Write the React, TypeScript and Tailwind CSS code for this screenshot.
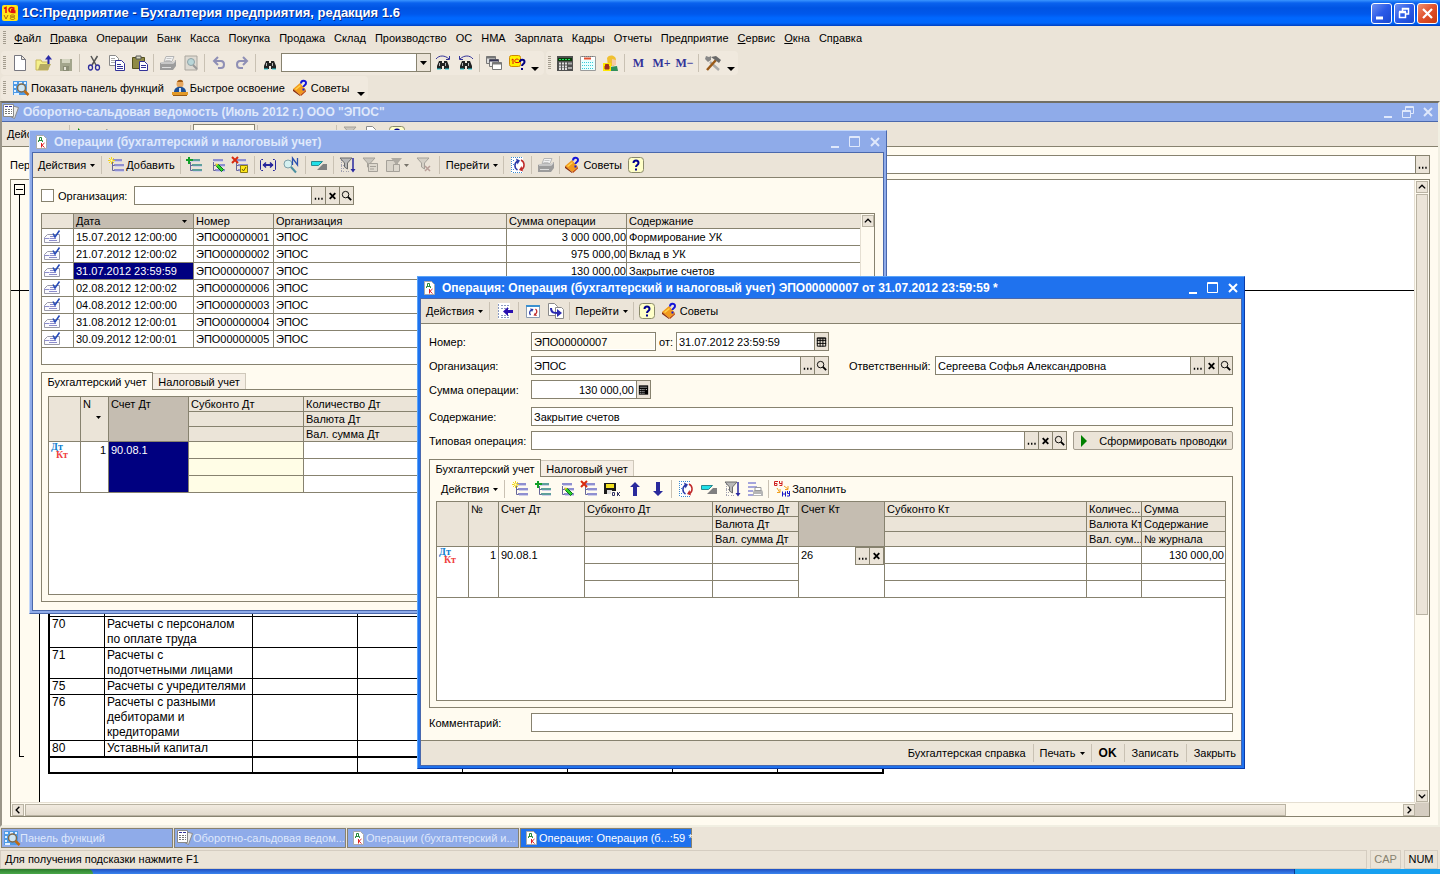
import type { InputHTMLAttributes, ReactNode } from "react"

type IconName = keyof typeof icons

const lines = (color = "#8f8fd0") => (
  <g>
    <path d="M4 2h10v2H4zM6 7h10v2H6zM6 12h10v2H6z" fill={color} />
    <path d="M5 4.500h9M7 9.500h9M7 14.500h9" stroke="#cfcfe8" />
    <path d="M4.500 5v8.500h2M4.500 8.500h2" stroke="#666699" fill="none" />
  </g>
)

const funnel = (fill: string, stroke: string) => (
  <path d="M1 1h12L8.500 6v6l-3-2V6z" fill={fill} stroke={stroke} />
)

const binoculars = (
  <g>
    <path d="M4 6h3v2h2V6h3l2 5v3h-5v-3H7v3H2v-3z" fill="#222" />
    <path d="M4.500 8v3M10.500 8v3" stroke="#b9b9b9" />
    <path d="M2 14h4M10 14h4" stroke="#20c8d8" />
  </g>
)

const icons = {
  logo: (
    <g>
      <rect width="16" height="16" rx="2" fill="#ffe61a" />
      <path d="M2 3.500l2-1V8M12.500 3.500C8 1 6 4 7.500 6.500c1 1 3 1 6 1M12.500 5c-2-1-3-.5-3 .5s2 .5 4 .5" stroke="#e01010" strokeWidth="1.500" fill="none" />
      <path d="M2 10l2 4 2-4M10.500 10c-3 0-3 2 0 2s3 2.500 0 2.500-3-2.500 0-2.500 3-2 0-2" stroke="#a86a10" fill="none" />
    </g>
  ),
  page: <path d="M2.500.5h7l4 4v11h-11zM9.500.5v4h4" fill="#fff" stroke="#77777f" />,
  open: (
    <g>
      <path d="M1 5h5l1 2h6v8H1z" fill="#f5f08a" stroke="#c9b85a" />
      <path d="M3 15l2-6h11l-3 6z" fill="#b5ab62" />
      <path d="M13.500 9V2" stroke="#2a2aa8" strokeWidth="2" />
      <path d="M10 4.500L13.500 0 17 4.500z" fill="#2a2aa8" />
    </g>
  ),
  save: (
    <g>
      <path d="M2 4h12v12H2z" fill="#a3a58c" />
      <path d="M4 4h8v4H4z" fill="#d3d3bf" />
      <path d="M5 11h6v5H5z" fill="#8b8d76" />
      <path d="M6 12h2v3H6z" fill="#e5e3d5" />
    </g>
  ),
  cut: (
    <g fill="none">
      <path d="M5 1l5 9M11.500 1L6 10" stroke="#555" strokeWidth="1.500" />
      <ellipse cx="4.500" cy="12.500" rx="2" ry="2.500" stroke="#2d2d9c" strokeWidth="1.300" />
      <ellipse cx="11.500" cy="12.500" rx="2" ry="2.500" stroke="#2d2d9c" strokeWidth="1.300" />
    </g>
  ),
  copy: (
    <g>
      <path d="M.5.5h6l3 3v7h-9z" fill="#fff" stroke="#8a8a8a" />
      <path d="M2 3.500h4M2 5.500h6M2 7.500h6" stroke="#aaa" />
      <path d="M6.500 5.500h6l3 3v7h-9z" fill="#fff" stroke="#333399" />
      <path d="M8 9.500h4M8 11.500h6M8 13.500h6" stroke="#333399" />
    </g>
  ),
  paste: (
    <g>
      <path d="M.5 2.500h12v11H.5z" fill="#8f8a45" stroke="#55511f" />
      <path d="M4 1h5v3H4z" fill="#d9d9c2" stroke="#555" />
      <path d="M7.500 6.500h5l3 3v6h-8z" fill="#fff" stroke="#333399" />
      <path d="M9 10.500h5M9 12.500h5" stroke="#333399" />
    </g>
  ),
  print: (
    <g>
      <path d="M6 1.500h8l-2 5H4z" fill="#f2f2f2" stroke="#b5b5b5" />
      <path d="M6.500 3.500h5M5.500 5.500h5" stroke="#c5c5c5" />
      <path d="M0 8l2-1h11l3-2v6l-3 4H0z" fill="#9c9c9c" />
      <path d="M1 8h12l2-2" stroke="#d5d5d5" strokeWidth="1.500" fill="none" />
      <path d="M2 12.500h9" stroke="#ddd" />
    </g>
  ),
  preview: (
    <g>
      <path d="M2 1h12v14H2z" fill="#dedad2" stroke="#aaa69e" />
      <circle cx="8" cy="7" r="3.500" fill="#b9d6d8" stroke="#8fa3a6" />
      <path d="M10 10l4 4" stroke="#999" strokeWidth="2" />
    </g>
  ),
  undo: (
    <g fill="none" stroke="#8f8fb5" strokeWidth="2">
      <path d="M4 6h6c4 0 4 7 0 7H7" />
      <path d="M7 2L3 6l4 4" />
    </g>
  ),
  redo: (
    <g fill="none" stroke="#8f8fb5" strokeWidth="2">
      <path d="M12 6H6c-4 0-4 7 0 7h3" />
      <path d="M9 2l4 4-4 4" />
    </g>
  ),
  find: binoculars,
  findNext: (
    <g>
      {binoculars}
      <path d="M1 4c3-4 9-4 13 0M14.500 1v3.500H11" stroke="#333399" fill="none" />
    </g>
  ),
  findPrev: (
    <g>
      {binoculars}
      <path d="M15 4c-3-4-9-4-13 0M1.500 1v3.500H5" stroke="#333399" fill="none" />
    </g>
  ),
  windows: (
    <g stroke="#777">
      <path d="M.5 1.500h9v7h-9z" fill="#ddd" />
      <path d="M.5 2.500h9" strokeWidth="2" />
      <path d="M3.500 4.500h9v7h-9z" fill="#eee" />
      <path d="M3.500 5.500h9" stroke="#335" strokeWidth="2" />
      <path d="M6.500 7.500h9v7h-9z" fill="#fff" />
      <path d="M6.500 8.500h9" strokeWidth="2" />
    </g>
  ),
  help1c: (
    <g>
      <rect x=".5" y=".5" width="11" height="11" rx="2" fill="#fff200" stroke="#d08a00" />
      <path d="M2.500 5l1.500-1v5M9.500 4.500C6 3 5 6 6.500 7.500h4" stroke="#e01010" fill="none" />
      <path d="M11 7c0-3 4.500-3 4.500 0 0 2-2.500 2-2.500 4M13 13v2" stroke="#000080" strokeWidth="2" fill="none" />
    </g>
  ),
  calc: (
    <g>
      <path d="M0 1h16v15H0z" fill="#505050" />
      <path d="M1 3h14v3H1z" fill="#0a3a0a" />
      <path d="M2 4.500h12" stroke="#20e060" strokeDasharray="2 1" />
      <path d="M2 8.500h8M2 11.500h8M2 14h8" stroke="#ddd" strokeWidth="2" strokeDasharray="2 1" />
      <path d="M11 8.500h4M11 13h4" stroke="#aaa" strokeWidth="2" />
    </g>
  ),
  calendar: (
    <g>
      <path d="M.5 1.500h15v14H.5z" fill="#e8ffff" stroke="#9a9a9a" />
      <path d="M1 2h14v3H1z" fill="#fff" />
      <path d="M4 3.500h7" stroke="#e05030" strokeWidth="2" />
      <path d="M2 1.500h12" stroke="#777" strokeDasharray="1 1" />
      <path d="M2 7.500h12M2 10.500h12M2 13.500h12" stroke="#38c8d8" strokeDasharray="1 1" />
    </g>
  ),
  user: (
    <g>
      <path d="M4 3c2-4 9-3 9 2l-2 6H5z" fill="#f0c030" />
      <path d="M9 4l4 1v5l-4 1z" fill="#f5c9a5" />
      <path d="M7 12l7-1 1 5H7z" fill="#2f8f5a" />
      <path d="M0 8h8v8H0z" fill="#ffe800" />
      <path d="M2 11h4v3H2zM2.500 11V9.500h3V11" fill="#a03020" stroke="#a03020" />
    </g>
  ),
  tools: (
    <g>
      <path d="M5 7l9 8" stroke="#aaa" strokeWidth="2.500" />
      <path d="M1 1l3 1 2-1v4L3 7 0 4z" fill="#888" />
      <path d="M11 5L2 15" stroke="#9a5a18" strokeWidth="2.500" />
      <path d="M6 2l5-1 5 4-2 3-4-3z" fill="#6a6a6a" />
    </g>
  ),
  panel: (
    <g>
      <path d="M0 1h14v14H0z" fill="#4f9be6" />
      <path d="M1 3h3M6 3h3M11 3h2M1 7h2M1 11h2M1 14h5" stroke="#e3f1ff" strokeWidth="2" />
      <circle cx="8.500" cy="8" r="4" fill="#cfe6f2" stroke="#806a4a" strokeWidth="1.500" />
      <path d="M11.500 11l4 4" stroke="#c06a10" strokeWidth="2.500" />
    </g>
  ),
  learn: (
    <g>
      <circle cx="8" cy="4" r="3.500" fill="#e8a860" />
      <path d="M5 2c1-3 6-3 6 0z" fill="#a05a10" />
      <path d="M2 12c0-7 12-7 12 0z" fill="#1c4f96" />
      <path d="M7 8h2v4H7z" fill="#cfe0f2" />
      <path d="M0 12h16v3H0z" fill="#e39a28" />
      <path d="M1 15.500h14" stroke="#9a5a10" />
    </g>
  ),
  book: (
    <g>
      <path d="M0 9l7-6 6 7-6 5z" fill="#f29a1c" />
      <path d="M0 9l7 6v1L0 11z" fill="#8a2a08" />
      <path d="M7 15l6-5v1.500L8 16z" fill="#c04a10" />
      <path d="M2 9l5-4 1 1-5 4z" fill="#ffd24a" />
      <path d="M8 3.500c0-3.500 5-3.500 5-.5 0 2.500-2.500 2-2.500 4M10.500 8.500v2" stroke="#1414d8" strokeWidth="2" fill="none" />
    </g>
  ),
  report: (
    <g>
      <path d="M8 1.500l7.500 2-4 11-4-2z" fill="#e9e9e9" stroke="#8a8a8a" />
      <path d="M.5.5h10v12H.5z" fill="#fff" stroke="#8a8a8a" />
      <path d="M2 2.500h7" stroke="#333399" strokeDasharray="3 1" />
      <path d="M2 5.500h7M2 7.500h7M2 9.500h7" stroke="#777" strokeDasharray="2 1" />
    </g>
  ),
  doc: (
    <g>
      <path d="M3.500 1.500h7l3 3v10h-10z" fill="#fff" stroke="#aaa" />
      <path d="M5.500 8V6.500h4V8M6.500 6V3.500h2V6" stroke="#268a3a" fill="none" />
      <path d="M8.500 9v4.500M11.500 9L9 11.200l2.500 2.300" stroke="#e02020" fill="none" />
    </g>
  ),
  row: (
    <g>
      <path d="M3.500 5.500h12v8H.5v-5z" fill="#fbfbff" stroke="#9a9aa8" />
      <path d="M.5 9.500h5M6 7.500h5M6 9.500h6M5 11.500h8" stroke="#8c8ccc" />
      <path d="M9 4.500L11 8l4.500-6.500" stroke="#2348b8" strokeWidth="1.500" fill="none" />
    </g>
  ),
  add: (
    <g>
      {lines()}
      <path d="M3.500 0v7M0 3.500h7M1 1l5 5M6 1L1 6" stroke="#f2d51a" />
      <path d="M2.500 2.500h2v2h-2z" fill="#fffbc0" />
    </g>
  ),
  addCopy: (
    <g>
      {lines("#5f9f9c")}
      <path d="M3 0v7M0 3h7" stroke="#12a028" strokeWidth="2" />
    </g>
  ),
  edit: (
    <g>
      {lines()}
      <path d="M7.500 7.500l2 0 5 5-2 2-5-5z" fill="#2cd52c" stroke="#0a6a1a" />
      <path d="M6.500 6.500l3 .5-2.500 2.500z" fill="#e8d020" />
    </g>
  ),
  remove: (
    <g>
      {lines()}
      <path d="M0 0l6 6M6 0L0 6" stroke="#d82a10" strokeWidth="2" />
    </g>
  ),
  mark: (
    <g>
      {lines()}
      <path d="M0 0l6 6M6 0L0 6" stroke="#d82a10" strokeWidth="2" />
      <path d="M8.500 8.500h7v7h-7z" fill="#ffe81a" stroke="#8a7a10" />
      <path d="M10 12l1.500 2L14 10" stroke="#6a5a10" fill="none" />
    </g>
  ),
  interval: (
    <g stroke="#26269c" fill="none">
      <path d="M3 2.500H1.500L.5 3.500v9l1 1H3M13 2.500h1.500l1 1v9l-1 1H13" />
      <path d="M3 8h10" strokeWidth="2" />
      <path d="M6 5.500L3.500 8 6 10.500M10 5.500L12.500 8 10 10.500" strokeWidth="1.500" />
    </g>
  ),
  findNumber: (
    <g>
      <circle cx="5" cy="7" r="4" fill="#d5f0f0" stroke="#7fa0a8" />
      <path d="M8 10l5 5.500" stroke="#4a90a0" strokeWidth="2" />
      <path d="M9.500 8V1l5 7V1" stroke="#2a50b0" fill="none" strokeWidth="1.300" />
    </g>
  ),
  posting: (
    <g>
      <path d="M.5 4.500h11l-4 4h-7z" fill="#20e0e8" stroke="#2a8a90" />
      <path d="M6 13l6-6h4v6z" fill="#808080" />
    </g>
  ),
  filter: (
    <g>
      <path d="M2.500 3v12M7 14.500h4M2 8.500h4M2 11.500h4M2 14.500h4" stroke="#a0a0b0" strokeDasharray="1 1" />
      {funnel("#b8b8b8", "#6a6a6a")}
      <path d="M14 1v13" stroke="#2a2aa0" strokeWidth="1.500" />
      <path d="M11.500 12h5L14 15.500z" fill="#2a2aa0" />
    </g>
  ),
  filterValue: (
    <g>
      {funnel("#c9c5bd", "#a5a199")}
      <path d="M6.500 6.500h9v8h-9z" fill="#ddd8ce" stroke="#a5a199" />
      <path d="M8 9.500h6M8 12h4" stroke="#a5a199" />
    </g>
  ),
  filterList: (
    <g>
      <path d="M.5 3.500h9v11h-9z" fill="#d8d3c9" stroke="#a5a199" />
      <path d="M5 1h11l-4 5v6l-3-1V6z" fill="#aeaaa2" />
      <path d="M7.500 7.500h6v7h-6z" fill="#ddd8ce" stroke="#a5a199" />
    </g>
  ),
  filterOff: (
    <g>
      {funnel("#d5d0c6", "#a5a199")}
      <path d="M9 9l5 5M14 9l-5 5" stroke="#b89f98" strokeWidth="1.500" />
    </g>
  ),
  refresh: (
    <g>
      <path d="M1 0h12v16H1z" fill="#fff" />
      <path d="M1.500 0v16M3 .5h10M3 15.500h10M3 3.500h2M3 7.500h1M3 12.500h2" stroke="#3a8ad0" strokeDasharray="1 1" />
      <path d="M7.500 13C4 11 4 5.500 8 4" stroke="#2a3aa8" strokeWidth="1.500" fill="none" />
      <path d="M6 1.500l4 2-2.500 4z" fill="#2a3aa8" />
      <path d="M11 3c4 2 4 7.500.5 9.500" stroke="#c02a2a" strokeWidth="1.500" fill="none" />
      <path d="M13 14.500l-4-1.500 2.500-4z" fill="#c02a2a" />
    </g>
  ),
  reread: (
    <g>
      <path d="M1.500 2.500h13v12h-13z" fill="#fff" stroke="#8a9ab0" />
      <path d="M1 3h14" stroke="#3a90d0" strokeWidth="2" />
      <path d="M5.500 12C4 10 4.500 8 6.500 7" stroke="#2a3aa8" fill="none" strokeWidth="1.300" />
      <path d="M5 5.500l3.500.5L7 9z" fill="#2a3aa8" />
      <path d="M10.500 6c2 1.500 1.500 4 0 5" stroke="#c02a2a" fill="none" strokeWidth="1.300" />
      <path d="M12 13l-3.500-.5L10 9.500z" fill="#c02a2a" />
    </g>
  ),
  toList: (
    <g>
      <path d="M1 0h12v16H1z" fill="#fff" />
      <path d="M1.500 1v15M4 2.500h8M4 5.500h8M4 12.500h8M4 14.500h8" stroke="#8a9ac0" strokeDasharray="2 1" />
      <path d="M10 8.500h6" stroke="#2a10b0" strokeWidth="3" />
      <path d="M6 8.500L11 4v9z" fill="#2a10b0" />
    </g>
  ),
  basedOn: (
    <g>
      <path d="M.5.5h6l3 3v9h-9z" fill="#fff" stroke="#8a8a8a" />
      <path d="M7.500 4.500h6l2 2v9h-8z" fill="#fff" stroke="#8a8a8a" />
      <path d="M3 5c0 5 3 5 7 5" stroke="#2a2ab0" strokeWidth="2" fill="none" />
      <path d="M9 6l5 4-5 4z" fill="#2a2ab0" />
    </g>
  ),
  help: (
    <g>
      <rect x=".5" y=".5" width="15" height="15" rx="3" fill="#ffffc8" stroke="#8a8a6a" />
      <path d="M5.500 6c0-3.500 5-3.500 5 0 0 2-2.500 2-2.500 4M8 11.500v2" stroke="#000090" strokeWidth="2" fill="none" />
    </g>
  ),
  saveOk: (
    <g>
      <path d="M0 2h12v11H0z" fill="#1a1a1a" />
      <path d="M2 3h8v4H2z" fill="#f2e020" />
      <path d="M3 9h5v4H3z" fill="#ddd" />
      <path d="M7 10h9v6H7z" fill="#fffbf0" />
      <path d="M8.500 11.500h2v3h-2zM13.500 11v4M16 11l-2 2 2 2" stroke="#333366" fill="none" />
    </g>
  ),
  up: <path d="M8 1l5 5h-3v9H6V6H3z" fill="#2a2a9c" />,
  down: <path d="M8 15l5-5h-3V1H6v9H3z" fill="#2a2a9c" />,
  printList: (
    <g>
      <path d="M1 2h8M1 6h9M1 10h5M1 14h5" stroke="#a5a5dc" strokeWidth="2" />
      <path d="M7 9h8l1 2v4H6v-4z" fill="#b5b5b5" />
      <path d="M8 6.500h6v3H8z" fill="#fff" stroke="#999" />
      <path d="M7 13.500h7" stroke="#fff" />
    </g>
  ),
  buNu: (
    <g fill="none">
      <path d="M4 .5H.5v4H3v-2H.5M5.500 0v2.500H8M8 0v4.500H5.500" stroke="#d02020" />
      <path d="M3 7l2.500 4M6 8v3.500H3M10 5l4 3M14 5v3.500h-3" stroke="#f0a020" />
      <path d="M8.500 10.500v5M11.500 10.500v5M8 13h4M13.500 10v2.500h2.500M15.500 10v5h-2.500" stroke="#1818c8" />
    </g>
  ),
}

function Icon({ name }: { name: IconName }) {
  return (
    <svg viewBox="0 0 16 16" className="h-4 w-4 shrink-0 overflow-visible" aria-hidden="true">
      {icons[name]}
    </svg>
  )
}

function Caret({ className = "" }: { className?: string }) {
  return (
    <svg viewBox="0 0 5 3" className={`h-[3px] w-[5px] shrink-0 ${className}`} aria-hidden="true">
      <path d="M0 0h5L2.500 3z" fill="currentColor" />
    </svg>
  )
}

function Sep({ wide }: { wide?: boolean }) {
  return <span className={`h-[18px] w-px shrink-0 bg-[#c9c1b3] ${wide ? "mx-[3px]" : "mx-[2px]"}`} />
}

function Grip() {
  return <span className="mx-[2px] h-[14px] w-[3px] shrink-0 bg-[repeating-linear-gradient(to_bottom,#a39c8e_0px,#a39c8e_1px,transparent_1px,transparent_2px)]" />
}

function IconButton({ name, label }: { name: IconName; label: string }) {
  return (
    <button type="button" aria-label={label} className="flex h-[22px] w-[23px] shrink-0 items-center justify-center">
      <Icon name={name} />
    </button>
  )
}

interface TextButtonProps {
  icon?: IconName
  menu?: boolean
  className?: string
  children: ReactNode
}

function TextButton({ icon, menu, className = "px-[3px]", children }: TextButtonProps) {
  return (
    <button type="button" className={`flex h-[20px] shrink-0 items-center whitespace-nowrap ${className}`}>
      {icon && <span className="mr-[2px]"><Icon name={icon} /></span>}
      <span>{children}</span>
      {menu && <Caret className="ml-[4px]" />}
    </button>
  )
}

function Overflow() {
  return (
    <button type="button" aria-label="Еще" className="flex h-[20px] w-[14px] shrink-0 items-end justify-center pb-[2px]">
      <svg viewBox="0 0 8 4" className="h-[4px] w-[8px]"><path d="M0 0h8L4 4z" /></svg>
    </button>
  )
}

const fieldButtons = {
  select: <path d="M3 10h1.500M6.500 10h1.500M10 10h1.500" stroke="#000" strokeWidth="2" />,
  clear: <path d="M4 4l6 6M10 4l-6 6" stroke="#000" strokeWidth="2" />,
  search: (
    <g stroke="#000" fill="none">
      <circle cx="6" cy="5.500" r="3.500" />
      <path d="M8.500 8l3.500 3.500" strokeWidth="2" />
    </g>
  ),
  date: <path d="M2.500 2.500h9v9h-9zM2 5.500h10M2 8.500h10M5.500 3v9M8.500 3v9M2 3.500h10" stroke="#000" fill="none" />,
  number: (
    <g>
      <path d="M2 2h10v10H2z" />
      <path d="M3 6.500h5M3 8.500h5M3 10.500h5M9.500 6.500h1.500" stroke="#fff" strokeDasharray="1 1" />
      <path d="M3 4h8" stroke="#999" />
    </g>
  ),
}

type FieldButton = keyof typeof fieldButtons

const fieldButtonLabels: Record<FieldButton, string> = {
  select: "Выбрать",
  clear: "Очистить",
  search: "Открыть",
  date: "Календарь",
  number: "Калькулятор",
}

function FieldGlyph({ kind }: { kind: FieldButton }) {
  return (
    <button
      type="button"
      aria-label={fieldButtonLabels[kind]}
      className="flex w-[14px] shrink-0 items-center justify-center border-l border-[#87826f] bg-[#ebe4d8]"
    >
      <svg viewBox="0 0 14 14" className="h-[14px] w-[13px]">{fieldButtons[kind]}</svg>
    </button>
  )
}

interface FieldProps extends InputHTMLAttributes<HTMLInputElement> {
  buttons?: FieldButton[]
  box?: string
}

function Field({ buttons = [], box = "flex-1", className = "bg-white px-[2px]", ...props }: FieldProps) {
  return (
    <div className={`flex h-[19px] min-w-0 border border-[#87826f] bg-white ${box}`}>
      <input {...props} className={`min-w-0 flex-1 outline-none ${className}`} />
      {buttons.map(kind => <FieldGlyph key={kind} kind={kind} />)}
    </div>
  )
}

function WindowButtons({ restore }: { restore?: boolean }) {
  return (
    <div className="flex items-center gap-[4px] pr-[1px]">
      <button type="button" aria-label="Свернуть">
        <svg viewBox="0 0 16 16" className="h-4 w-4"><path d="M4 13h8" stroke="currentColor" strokeWidth="2" /></svg>
      </button>
      <button type="button" aria-label="Развернуть">
        <svg viewBox="0 0 16 16" className="h-4 w-4" fill="none" stroke="currentColor">
          {restore
            ? <path d="M2.500 6.500h8v7h-8zM2 7.500h9M5.500 6V2.500h8v7H11M5 3.500h9" />
            : <path d="M2.500 2.500h10v10h-10zM2 3.500h11" />}
        </svg>
      </button>
      <button type="button" aria-label="Закрыть">
        <svg viewBox="0 0 16 16" className="h-4 w-4"><path d="M4 4l8 8M12 4l-8 8" stroke="currentColor" strokeWidth="2" /></svg>
      </button>
    </div>
  )
}

function ScrollButton({ dir }: { dir: "up" | "down" | "left" | "right" }) {
  const paths = { up: "M2 7l3.500-3.500L9 7", down: "M2 4l3.500 3.500L9 4", left: "M7 2L3.500 5.500 7 9", right: "M4 2l3.500 3.500L4 9" }
  return (
    <button type="button" aria-label="Прокрутка" className="h-[12px] w-[12px] shrink-0 border border-[#b9b3a3] bg-[#ebe4d8]">
      <svg viewBox="0 0 11 11" className="h-[10px] w-[10px]">
        <path d={paths[dir]} stroke="#000" strokeWidth="1.500" fill="none" />
      </svg>
    </button>
  )
}

function Tabs({ current = "Бухгалтерский учет" }) {
  return (
    <div role="tablist" className="flex h-[17px] items-end">
      {["Бухгалтерский учет", "Налоговый учет"].map(tab => (
        <button
          key={tab}
          type="button"
          role="tab"
          aria-selected={tab === current}
          className={tab === current
            ? "relative z-10 -mb-px h-[18px] w-[112px] border border-b-0 border-[#87826f] bg-[#fffbf0] whitespace-nowrap"
            : "h-[16px] w-[93px] border border-b-0 border-l-0 border-[#cfc8ba] bg-[#f5eee4] whitespace-nowrap"}
        >
          {tab}
        </button>
      ))}
    </div>
  )
}

const cell = "border-r border-b border-[#87826f] p-0 px-[2px] font-normal text-left align-top leading-[14px] overflow-hidden whitespace-nowrap"
const head = `${cell} h-[15px] bg-[#ebe4d8]`
const headSelected = `${cell} h-[15px] bg-[#c5bdb1]`
const body = `${cell} h-[17px] bg-white pt-px`

function DtKt() {
  return (
    <div className="font-['Liberation_Serif',serif] text-[10px] leading-[8px] font-bold">
      <div className="text-[#1080d0]">Дт</div>
      <div className="pl-[5px] text-[#f04040]">Кт</div>
    </div>
  )
}

const menu = [
  ["Ф", "айл"], ["П", "равка"], ["", "Операции"], ["", "Банк"], ["", "Касса"], ["", "Покупка"],
  ["", "Продажа"], ["", "Склад"], ["", "Производство"], ["", "ОС"], ["", "НМА"], ["", "Зарплата"],
  ["", "Кадры"], ["", "Отчеты"], ["", "Предприятие"], ["С", "ервис"], ["О", "кна"], ["", "Справка"],
]

function AppTitle() {
  return (
    <header className="flex h-[26px] items-center gap-[4px] bg-[linear-gradient(to_bottom,#3a95ff_0px,#0a62ee_3px,#0054e3_8px,#0058ec_14px,#0068ff_18px,#0066fb_23px,#0040c0_26px)] pr-[2px] pl-[2px] text-white">
      <Icon name="logo" />
      <h1 className="flex-1 text-[13px] font-bold [text-shadow:1px_1px_#0a2a88]">1С:Предприятие - Бухгалтерия предприятия, редакция 1.6</h1>
      <div className="flex gap-[2px]">
        <button type="button" aria-label="Свернуть" className="h-[21px] w-[21px] rounded-[3px] border border-white bg-[linear-gradient(135deg,#7090f0,#2a5ae8_50%,#1a48d0)]">
          <svg viewBox="0 0 19 19"><path d="M4 14h7" stroke="#fff" strokeWidth="3" /></svg>
        </button>
        <button type="button" aria-label="Восстановить" className="h-[21px] w-[21px] rounded-[3px] border border-white bg-[linear-gradient(135deg,#7090f0,#2a5ae8_50%,#1a48d0)]">
          <svg viewBox="0 0 19 19" fill="none" stroke="#fff">
            <path d="M4.500 8.500h6v5h-6zM4 7.500h7M7.500 7V4.500h6v5.500H11M7 5h7" strokeWidth="1.500" />
          </svg>
        </button>
        <button type="button" aria-label="Закрыть" className="h-[21px] w-[21px] rounded-[3px] border border-white bg-[linear-gradient(135deg,#f09070,#e0502a_50%,#c83a10)]">
          <svg viewBox="0 0 19 19"><path d="M5 5l9 9M14 5l-9 9" stroke="#fff" strokeWidth="2.200" /></svg>
        </button>
      </div>
    </header>
  )
}

function AppToolbars() {
  return (
    <>
      <nav className="flex h-[24px] items-center pl-[1px]">
        <Grip />
        <div className="ml-[6px] flex gap-[9px]">
          {menu.map(([key, rest]) => (
            <button key={rest} type="button" className="whitespace-nowrap">
              {rest === "Справка" ? <>Сп<u>р</u>авка</> : <>{key && <u>{key}</u>}{rest}</>}
            </button>
          ))}
        </div>
      </nav>
      <div className="flex h-[25px] items-center gap-[2px] pl-[1px]">
        <div className="flex h-[24px] items-center rounded bg-[#f0e9de] pr-[2px]">
          <Grip />
          <IconButton name="page" label="Новый" />
          <IconButton name="open" label="Открыть" />
          <IconButton name="save" label="Сохранить" />
          <Sep />
          <IconButton name="cut" label="Вырезать" />
          <IconButton name="copy" label="Копировать" />
          <IconButton name="paste" label="Вставить" />
          <Sep />
          <IconButton name="print" label="Печать" />
          <IconButton name="preview" label="Просмотр" />
          <Sep />
          <IconButton name="undo" label="Отменить" />
          <IconButton name="redo" label="Вернуть" />
          <Sep />
          <IconButton name="find" label="Найти" />
          <div className="flex h-[19px] w-[150px] border border-[#87826f] bg-white">
            <input aria-label="Поиск" className="min-w-0 flex-1 px-[2px] outline-none" />
            <button type="button" aria-label="История поиска" className="flex w-[14px] items-center justify-center border-l border-[#87826f] bg-[#ebe4d8]">
              <svg viewBox="0 0 7 4" className="h-[4px] w-[7px]"><path d="M0 0h7L3.500 4z" /></svg>
            </button>
          </div>
          <IconButton name="findNext" label="Найти далее" />
          <IconButton name="findPrev" label="Найти назад" />
          <Sep />
          <IconButton name="windows" label="Окна" />
          <IconButton name="help1c" label="Содержание справки" />
          <Overflow />
        </div>
        <div className="flex h-[24px] items-center rounded bg-[#f0e9de]">
          <Grip />
          <IconButton name="calc" label="Калькулятор" />
          <IconButton name="calendar" label="Календарь" />
          <IconButton name="user" label="Пользователи" />
          <Sep />
          {["M", "M+", "M−"].map(text => (
            <button key={text} type="button" className="w-[23px] font-['Liberation_Serif',serif] text-[12px] font-bold text-[#333399]">{text}</button>
          ))}
          <Sep />
          <IconButton name="tools" label="Сервис" />
          <Overflow />
        </div>
      </div>
      <div className="flex h-[26px] items-center pl-[1px]">
        <div className="flex h-[24px] items-center rounded bg-[#f0e9de]">
          <Grip />
          <div className="ml-[2px] flex items-center gap-[2px]">
            <TextButton icon="panel">Показать панель функций</TextButton>
            <TextButton icon="learn">Быстрое освоение</TextButton>
            <TextButton icon="book">Советы</TextButton>
            <Overflow />
          </div>
        </div>
      </div>
    </>
  )
}

const accounts = [
  ["70", "Расчеты с персоналом\nпо оплате труда"],
  ["71", "Расчеты с\nподотчетными лицами"],
  ["75", "Расчеты с учредителями"],
  ["76", "Расчеты с разными\nдебиторами и\nкредиторами"],
  ["80", "Уставный капитал"],
]

function Sheet() {
  const td = "border-r border-b border-black p-0 pl-[2px] align-top leading-[15px]"
  const blanks = [0, 1, 2, 3, 4, 5]
  return (
    <div className="flex min-h-0 flex-1 flex-col border border-[#87826f] bg-white">
      <div className="flex min-h-0 flex-1">
        <div className="relative flex min-w-0 flex-1 overflow-hidden">
          <div className="w-[29px] shrink-0 border-r border-black bg-[#fffbf0] pt-[4px] pl-[3px]">
            <button type="button" aria-label="Свернуть группу" className="flex h-[11px] w-[11px] items-center justify-center border border-black">
              <span className="h-px w-[7px] bg-black" />
            </button>
            <div className="ml-[5px] h-[562px] w-[5px] border-b border-l border-black" />
          </div>
          {/* fixed rows divider */}
          <div className="absolute inset-x-0 top-[110px] h-px bg-black" />
          <div className="pt-[112px] pl-[8px]">
            <table className="w-[836px] table-fixed border-separate border-spacing-0 border-2 border-r border-b-0 border-black text-[12px]">
              <colgroup>
                <col className="w-[55px]" />
                <col className="w-[148px]" />
                {blanks.map(i => <col key={i} className="w-[105px]" />)}
              </colgroup>
              <tbody>
                <tr>
                  <td className={`${td} h-[323px]`} />
                  <td className={td} />
                  {blanks.map(i => <td key={i} className={td} />)}
                </tr>
                {accounts.map(([code, name]) => (
                  <tr key={code}>
                    <td className={td}>{code}</td>
                    <td className={`${td} whitespace-pre`}>{name}</td>
                    {blanks.map(i => <td key={i} className={td} />)}
                  </tr>
                ))}
                <tr>
                  <td colSpan={2} className={`${td} h-[17px] border-t border-b-2`} />
                  {blanks.map(i => <td key={i} className={`${td} border-t border-b-2`} />)}
                </tr>
              </tbody>
            </table>
          </div>
        </div>
        <div className="flex w-[15px] shrink-0 flex-col items-center border-l border-[#e5dfd2] bg-[#fffbf0] pt-px">
          <ScrollButton dir="up" />
          <div className="mt-px h-[421px] w-[12px] border border-[#b9b3a3] bg-[#ebe4d8]" />
          <div className="flex-1" />
          <ScrollButton dir="down" />
        </div>
      </div>
      <div className="flex h-[14px] shrink-0 items-center border-t border-[#e5dfd2] bg-[#fffbf0] pl-px">
        <ScrollButton dir="left" />
        <div className="ml-px h-[12px] w-[89%] border border-[#b9b3a3] bg-[linear-gradient(to_bottom,#f2ebe0,#e3dbcd)]" />
        <div className="flex-1" />
        <ScrollButton dir="right" />
        <span className="h-full w-[14px] bg-[#d5cdc1]" />
      </div>
    </div>
  )
}

function ReportWindow() {
  return (
    <section className="flex min-h-0 flex-1 flex-col bg-[#fffbf0]">
      <div className="flex h-[19px] shrink-0 items-center border-b border-[#4a68ac] bg-[#8fabe9] pr-[1px] pl-[1px] text-[#dfe8fb]">
        <Icon name="report" />
        <h2 className="ml-[4px] flex-1 text-[12px] font-bold">Оборотно-сальдовая ведомость (Июль 2012 г.) ООО "ЭПОС"</h2>
        <WindowButtons restore />
      </div>
      <div className="flex h-[25px] shrink-0 items-center border-b border-[#87826f] bg-[#ebe4d8] pl-[2px]">
        <TextButton menu>Действия</TextButton>
        <Sep />
        <button type="button" className="flex w-[116px] items-center gap-[8px] pl-[6px]">
          <svg viewBox="0 0 8 12" className="h-[12px] w-[8px]"><path d="M0 0l6 6-6 6z" fill="#008000" /></svg>
          Сформировать
        </button>
        <Sep />
        <button type="button" aria-pressed="true" className="h-[20px] w-[62px] border border-[#87826f] bg-[#fffbf0] px-[4px] text-left whitespace-nowrap">Заголовок</button>
        <Sep />
        <TextButton className="w-[74px] px-[3px]">Настройка...</TextButton>
        <Sep />
        <IconButton name="filterValue" label="Сохранить значения" />
        <IconButton name="basedOn" label="Восстановить значения" />
        <IconButton name="help" label="Справка" />
      </div>
      <div className="flex min-h-0 flex-1 flex-col gap-[5px] p-[8px]">
        <div className="flex shrink-0 items-center gap-[8px]">
          <label htmlFor="period">Период:</label>
          <Field id="period" buttons={["select"]} />
        </div>
        <Sheet />
      </div>
    </section>
  )
}

interface MdiWindowProps {
  title: string
  active?: boolean
  place: string
  children: ReactNode
}

function MdiWindow({ title, active, place, children }: MdiWindowProps) {
  return (
    <section
      className={`absolute flex flex-col border px-[2px] pb-[2px] ${place} ${active
        ? "border-t-[#5ba4f8] border-r-[#0a3aa8] border-b-[#0a3aa8] border-l-[#5ba4f8] bg-[#1f72ee] text-white"
        : "border-t-[#c5d8fa] border-r-[#4a68ac] border-b-[#4a68ac] border-l-[#c5d8fa] bg-[#8fabe9] text-[#dfe8fb]"}`}
    >
      <div className="flex h-[21px] shrink-0 items-center pl-[1px]">
        <Icon name="doc" />
        <h2 className="ml-[5px] flex-1 text-[12px] font-bold whitespace-nowrap">{title}</h2>
        <WindowButtons />
      </div>
      <div className="flex min-h-0 flex-1 flex-col border border-[#4a68ac] bg-[#fffbf0] text-black">{children}</div>
    </section>
  )
}

const operations = [
  ["15.07.2012 12:00:00", "ЭПО00000001", "3 000 000,00", "Формирование УК"],
  ["21.07.2012 12:00:02", "ЭПО00000002", "975 000,00", "Вклад в УК"],
  ["31.07.2012 23:59:59", "ЭПО00000007", "130 000,00", "Закрытие счетов"],
  ["02.08.2012 12:00:02", "ЭПО00000006", "", ""],
  ["04.08.2012 12:00:00", "ЭПО00000003", "", ""],
  ["31.08.2012 12:00:01", "ЭПО00000004", "", ""],
  ["30.09.2012 12:00:01", "ЭПО00000005", "", ""],
]

function OperationsWindow() {
  const selected = "ЭПО00000007"
  return (
    <MdiWindow title="Операции (бухгалтерский и налоговый учет)" place="top-[27px] left-[27px] h-[484px] w-[858px]">
      <div className="flex h-[25px] shrink-0 items-center border-b border-[#87826f] bg-[#ebe4d8] pl-[2px]">
        <TextButton menu>Действия</TextButton>
        <Sep wide />
        <TextButton icon="add">Добавить</TextButton>
        <Sep />
        <IconButton name="addCopy" label="Скопировать" />
        <IconButton name="edit" label="Изменить" />
        <IconButton name="mark" label="Пометить на удаление" />
        <Sep />
        <IconButton name="interval" label="Интервал" />
        <IconButton name="findNumber" label="Найти по номеру" />
        <Sep />
        <IconButton name="posting" label="Проводки" />
        <Sep />
        <IconButton name="filter" label="Отбор и сортировка" />
        <IconButton name="filterValue" label="Отбор по значению" />
        <button type="button" aria-label="История отборов" className="flex w-[31px] items-center justify-center gap-[2px] text-[#77736a]">
          <Icon name="filterList" />
          <Caret />
        </button>
        <IconButton name="filterOff" label="Отключить отбор" />
        <Sep wide />
        <TextButton menu>Перейти</TextButton>
        <Sep />
        <IconButton name="refresh" label="Обновить" />
        <Sep />
        <IconButton name="print" label="Печать" />
        <Sep />
        <TextButton icon="book">Советы</TextButton>
        <IconButton name="help" label="Справка" />
      </div>
      <div className="flex min-h-0 flex-1 flex-col p-[8px]">
        <div className="flex items-center">
          <input id="by-org" type="checkbox" className="h-[13px] w-[13px] appearance-none border border-[#87826f] bg-white" />
          <label htmlFor="by-org" className="ml-[4px] w-[76px]">Организация:</label>
          <Field aria-label="Организация" box="w-[220px]" buttons={["select", "clear", "search"]} />
        </div>
        <div className="mt-[8px] flex h-[152px] shrink-0 border border-[#87826f] bg-white">
          <div className="min-w-0 flex-1">
            <table className="w-full table-fixed border-separate border-spacing-0">
              <colgroup>
                <col className="w-[32px]" />
                <col className="w-[120px]" />
                <col className="w-[80px]" />
                <col className="w-[233px]" />
                <col className="w-[120px]" />
                <col />
              </colgroup>
              <thead>
                <tr>
                  <th className={head} />
                  <th className={headSelected}>
                    <span className="flex items-center justify-between pr-[4px]">Дата<Caret /></span>
                  </th>
                  <th className={head}>Номер</th>
                  <th className={head}>Организация</th>
                  <th className={head}>Сумма операции</th>
                  <th className={`${head} border-r-0`}>Содержание</th>
                </tr>
              </thead>
              <tbody>
                {operations.map(([date, number, sum, text]) => (
                  <tr key={number}>
                    <td className={`${cell} h-[17px]`}><Icon name="row" /></td>
                    <td className={number === selected ? `${cell} h-[17px] bg-[#000080] pt-px text-white` : body}>{date}</td>
                    <td className={body}>{number}</td>
                    <td className={body}>ЭПОС</td>
                    <td className={`${body} pr-0 text-right`}>{sum}</td>
                    <td className={`${body} border-r-0`}>{text}</td>
                  </tr>
                ))}
              </tbody>
            </table>
          </div>
          <div className="flex w-[14px] flex-col items-center border-l border-[#e5dfd2] bg-[#fffbf0] pt-px">
            <ScrollButton dir="up" />
          </div>
        </div>
        <div className="h-[7px] shrink-0" />
        <Tabs />
        <div className="min-h-0 flex-1 border border-[#87826f] p-[6px]">
          <div className="h-full border border-[#87826f] bg-white">
            <table className="w-full table-fixed border-separate border-spacing-0">
              <colgroup>
                <col className="w-[32px]" />
                <col className="w-[28px]" />
                <col className="w-[80px]" />
                <col className="w-[115px]" />
                <col />
              </colgroup>
              <thead>
                <tr>
                  <th rowSpan={3} className={head} />
                  <th rowSpan={3} className={head}>N<Caret className="mt-[5px] ml-[13px]" /></th>
                  <th rowSpan={3} className={headSelected}>Счет Дт</th>
                  <th className={head}>Субконто Дт</th>
                  <th className={head}>Количество Дт</th>
                </tr>
                <tr><th className={head} /><th className={head}>Валюта Дт</th></tr>
                <tr><th className={head} /><th className={head}>Вал. сумма Дт</th></tr>
              </thead>
              <tbody>
                <tr>
                  <td rowSpan={3} className={body}><DtKt /></td>
                  <td rowSpan={3} className={`${body} text-right`}>1</td>
                  <td rowSpan={3} className={`${cell} bg-[#000080] pt-px text-white`}>90.08.1</td>
                  <td className={`${cell} h-[17px] bg-[#fffde6]`} />
                  <td className={body} />
                </tr>
                <tr><td className={`${cell} h-[17px] bg-[#fffde6]`} /><td className={body} /></tr>
                <tr><td className={`${cell} h-[17px] bg-[#fffde6]`} /><td className={body} /></tr>
              </tbody>
            </table>
          </div>
        </div>
      </div>
    </MdiWindow>
  )
}

function EntriesTable() {
  const last = "border-r-0"
  return (
    <table className="w-full table-fixed border-separate border-spacing-0">
      <colgroup>
        <col className="w-[32px]" />
        <col className="w-[30px]" />
        <col className="w-[86px]" />
        <col className="w-[128px]" />
        <col className="w-[86px]" />
        <col className="w-[86px]" />
        <col />
        <col className="w-[55px]" />
        <col className="w-[83px]" />
      </colgroup>
      <thead>
        <tr>
          <th rowSpan={3} className={head} />
          <th rowSpan={3} className={head}>№</th>
          <th rowSpan={3} className={head}>Счет Дт</th>
          <th className={head}>Субконто Дт</th>
          <th className={head}>Количество Дт</th>
          <th rowSpan={3} className={headSelected}>Счет Кт</th>
          <th className={head}>Субконто Кт</th>
          <th className={head}>Количес...</th>
          <th className={`${head} ${last}`}>Сумма</th>
        </tr>
        <tr>
          <th className={head} />
          <th className={head}>Валюта Дт</th>
          <th className={head} />
          <th className={head}>Валюта Кт</th>
          <th className={`${head} ${last}`}>Содержание</th>
        </tr>
        <tr>
          <th className={head} />
          <th className={head}>Вал. сумма Дт</th>
          <th className={head} />
          <th className={head}>Вал. сум...</th>
          <th className={`${head} ${last}`}>№ журнала</th>
        </tr>
      </thead>
      <tbody>
        <tr>
          <td rowSpan={3} className={body}><DtKt /></td>
          <td rowSpan={3} className={`${body} text-right`}>1</td>
          <td rowSpan={3} className={body}>90.08.1</td>
          <td className={body} />
          <td className={body} />
          <td rowSpan={3} className={`${cell} bg-white pr-0`}>
            <div className="flex h-[18px] items-start">
              <input aria-label="Счет Кт" defaultValue="26" className="h-[16px] min-w-0 flex-1 outline-none" />
              <span className="flex h-[18px] border-y border-r border-[#87826f]">
                <FieldGlyph kind="select" />
                <FieldGlyph kind="clear" />
              </span>
            </div>
          </td>
          <td className={body} />
          <td className={body} />
          <td className={`${body} ${last} pr-px text-right`}>130 000,00</td>
        </tr>
        <tr><td className={body} /><td className={body} /><td className={body} /><td className={body} /><td className={`${body} ${last}`} /></tr>
        <tr><td className={body} /><td className={body} /><td className={body} /><td className={body} /><td className={`${body} ${last}`} /></tr>
      </tbody>
    </table>
  )
}

function OperationDialog() {
  const label = "w-[102px] shrink-0 whitespace-nowrap"
  return (
    <MdiWindow
      active
      title="Операция: Операция (бухгалтерский и налоговый учет) ЭПО00000007 от 31.07.2012 23:59:59 *"
      place="top-[173px] left-[415px] h-[493px] w-[828px]"
    >
      <div className="flex h-[25px] shrink-0 items-center border-b border-[#87826f] bg-[#ebe4d8] pl-[2px]">
        <TextButton menu>Действия</TextButton>
        <Sep wide />
        <IconButton name="toList" label="Найти в списке" />
        <Sep />
        <IconButton name="reread" label="Перечитать" />
        <IconButton name="basedOn" label="Скопировать" />
        <Sep />
        <TextButton menu>Перейти</TextButton>
        <Sep />
        <IconButton name="help" label="Справка" />
        <TextButton icon="book">Советы</TextButton>
      </div>
      <form className="flex min-h-0 flex-1 flex-col px-[8px] pt-[8px]" onSubmit={e => e.preventDefault()}>
        <div className="flex flex-col gap-[5px]">
          <div className="flex items-center">
            <label htmlFor="number" className={label}>Номер:</label>
            <Field id="number" box="w-[125px]" className="m-px bg-[#fffbf0] px-px" defaultValue="ЭПО00000007" />
            <label htmlFor="date" className="w-[20px] text-center">от:</label>
            <Field id="date" box="w-[153px]" buttons={["date"]} defaultValue="31.07.2012 23:59:59" />
          </div>
          <div className="flex items-center">
            <label htmlFor="org" className={label}>Организация:</label>
            <Field id="org" buttons={["select", "search"]} defaultValue="ЭПОС" />
            <label htmlFor="owner" className="ml-[20px] w-[86px] whitespace-nowrap">Ответственный:</label>
            <Field id="owner" buttons={["select", "clear", "search"]} defaultValue="Сергеева Софья Александровна" />
          </div>
          <div className="flex items-center">
            <label htmlFor="sum" className={label}>Сумма операции:</label>
            <Field id="sum" box="w-[120px]" className="bg-white px-[2px] text-right" buttons={["number"]} defaultValue="130 000,00" />
          </div>
          <div className="mt-[3px] flex items-center">
            <label htmlFor="content" className={label}>Содержание:</label>
            <Field id="content" defaultValue="Закрытие счетов" />
          </div>
          <div className="flex items-center">
            <label htmlFor="template" className={label}>Типовая операция:</label>
            <Field id="template" buttons={["select", "clear", "search"]} />
            <button type="button" className="ml-[6px] flex h-[19px] w-[160px] items-center rounded-[2px] border border-[#a39c8e] bg-[#ebe4d8] pl-[7px]">
              <svg viewBox="0 0 6 12" className="h-[12px] w-[6px]"><path d="M0 0l6 6-6 6z" fill="#008000" /></svg>
              <span className="flex-1 pr-[5px] text-right whitespace-nowrap">Сформировать проводки</span>
            </button>
          </div>
        </div>
        <div className="h-[9px] shrink-0" />
        <Tabs />
        <div className="flex min-h-0 flex-1 flex-col border border-[#87826f] px-[6px] pb-[6px]">
          <div className="flex h-[24px] shrink-0 items-center pl-[2px]">
            <TextButton menu>Действия</TextButton>
            <Sep wide />
            <IconButton name="add" label="Добавить" />
            <IconButton name="addCopy" label="Скопировать" />
            <IconButton name="edit" label="Изменить" />
            <IconButton name="remove" label="Удалить" />
            <IconButton name="saveOk" label="Закончить редактирование" />
            <IconButton name="up" label="Вверх" />
            <IconButton name="down" label="Вниз" />
            <Sep />
            <IconButton name="refresh" label="Обновить" />
            <IconButton name="posting" label="Проводки" />
            <IconButton name="filter" label="Отбор" />
            <IconButton name="printList" label="Вывести список" />
            <Sep />
            <TextButton icon="buNu">Заполнить</TextButton>
          </div>
          <div className="min-h-0 flex-1 border border-[#87826f] bg-white">
            <EntriesTable />
          </div>
        </div>
        <div className="flex items-center pt-[5px] pb-[8px]">
          <label htmlFor="comment" className={label}>Комментарий:</label>
          <Field id="comment" />
        </div>
      </form>
      <div className="flex h-[25px] shrink-0 items-center justify-end border-t border-[#87826f] bg-[#ebe4d8]">
        <TextButton className="px-[5px]">Бухгалтерская справка</TextButton>
        <Sep />
        <TextButton menu className="px-[4px]">Печать</TextButton>
        <Sep />
        <TextButton className="px-[5px] text-[12px] font-bold">OK</TextButton>
        <Sep />
        <TextButton className="px-[5px]">Записать</TextButton>
        <Sep />
        <TextButton className="px-[5px]">Закрыть</TextButton>
      </div>
    </MdiWindow>
  )
}

const openWindows: { icon: IconName; title: string; active?: boolean }[] = [
  { icon: "panel", title: "Панель функций" },
  { icon: "report", title: "Оборотно-сальдовая ведом..." },
  { icon: "doc", title: "Операции (бухгалтерский и..." },
  { icon: "doc", title: "Операция: Операция (б...:59 *", active: true },
]

export default function App() {
  return (
    <div className="flex min-h-screen flex-col bg-[#ebe4d8] font-['Liberation_Sans',Arial,sans-serif] text-[11px] leading-[14px] text-black">
      <AppTitle />
      <AppToolbars />
      <main className="relative flex flex-1 flex-col overflow-hidden border-2 border-t-[#716f64] border-r-[#f1efe2] border-b-[#f1efe2] border-l-[#9a9588]">
        <ReportWindow />
        <OperationsWindow />
        <OperationDialog />
      </main>
      <div className="flex h-[22px] shrink-0 items-center gap-px pl-[1px]">
        {openWindows.map(({ icon, title, active }) => (
          <button
            key={title}
            type="button"
            className={`flex h-[20px] w-[172px] items-center border border-[#87826f] pl-[2px] whitespace-nowrap ${active ? "bg-[#1f72ee] text-white" : "bg-[#8fabe9] text-[#dfe8fb]"}`}
          >
            <Icon name={icon} />
            {title}
          </button>
        ))}
      </div>
      <footer className="flex h-[20px] shrink-0 items-center gap-[3px] pr-[2px]">
        <span className="flex h-[19px] flex-1 items-center border border-[#d5cdc1] pl-[4px]">Для получения подсказки нажмите F1</span>
        <span className="flex h-[19px] w-[31px] items-center justify-center border border-[#d5cdc1] text-[#87826f]">CAP</span>
        <span className="flex h-[19px] w-[34px] items-center justify-center border border-[#d5cdc1]">NUM</span>
      </footer>
      <div className="flex h-[5px] shrink-0 bg-[linear-gradient(to_bottom,#1f4fc0,#3a84f0)]">
        <span className="w-[93px] rounded-tr-[6px] bg-[linear-gradient(to_bottom,#2a7a2a,#4aa84a)]" />
        <span className="flex-1" />
        <span className="w-[146px] border-l border-[#0a3a90] bg-[#18a0f0]" />
      </div>
    </div>
  )
}
